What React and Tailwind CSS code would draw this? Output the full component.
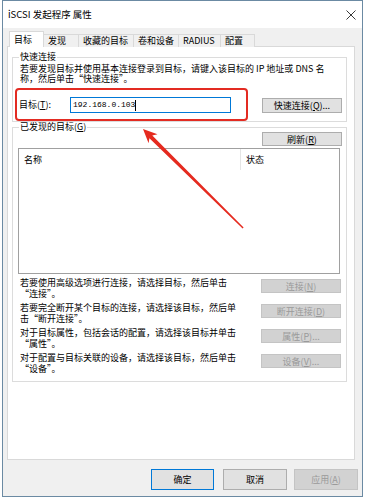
import React from "react";

const F = { fontFamily: '"Noto Sans CJK SC", "Noto Sans", sans-serif' };

function Btn({ children, w = "w-[80px]", disabled = false, def = false, h = "h-[15px]" }) {
  return (
    <div
      className={`${w} ${h} flex items-center justify-center text-[9px] leading-none shrink-0 border ${
        disabled
          ? "bg-[#d2d2d2] border-[#c4c4c4] text-[#9a9a9a]"
          : def
          ? "bg-[#e1e1e1] border-[#0078d7] text-black"
          : "bg-[#e1e1e1] border-[#adadad] text-black"
      }`}
    >
      {children}
    </div>
  );
}

const U = ({ c }) => <span className="underline">{c}</span>;

function Row({ l1, l2, btn }) {
  return (
    <div className="flex justify-between h-[25px]">
      <div className="pl-[7px] text-[9px] leading-[11px] text-black">
        <div>{l1}</div>
        <div>{l2}</div>
      </div>
      <div className="pt-[2px] pr-[5px]">
        <Btn disabled h="h-[14px]">{btn}</Btn>
      </div>
    </div>
  );
}

export default function App() {
  const tabs = [
    ["发现", "w-[35px]"],
    ["收藏的目标", "w-[55px]"],
    ["卷和设备", "w-[45px]"],
    ["RADIUS", "w-[42px]"],
    ["配置", "w-[34px]"],
  ];
  return (
    <div className="relative w-[365px] h-[500px] bg-white overflow-hidden" style={F}>
      <div className="ml-[2px] w-[361px] h-[497px] border border-[#6b8aa3] flex flex-col">
        {/* title bar */}
        <div className="h-[27px] bg-white flex items-center justify-between pl-[5px] pr-[6px] shrink-0">
          <span className="text-[9.5px] text-black">iSCSI 发起程序 属性</span>
          <svg width="10" height="10" viewBox="0 0 10 10">
            <path d="M0.5 0.5 L9.5 9.5 M9.5 0.5 L0.5 9.5" stroke="#222" strokeWidth="0.9" />
          </svg>
        </div>
        {/* body */}
        <div className="flex-1 bg-[#f0f0f0] flex flex-col pl-[4px] pr-[4px]">
          {/* tabs */}
          <div className="flex items-end h-[15px] mt-[4px] pl-[2px] relative z-10 -mb-px">
            <div className="w-[35px] h-[16px] bg-white border border-b-0 border-[#d9d9d9] flex items-center pl-[4px] text-[9px] text-black">
              目标
            </div>
            {tabs.map(([t, w]) => (
              <div
                key={t}
                className={`${w} h-[13px] bg-[#f0f0f0] border border-l-0 border-b-0 border-[#d9d9d9] flex items-center pl-[4px] text-[9px] text-black`}
              >
                {t}
              </div>
            ))}
          </div>
          {/* panel */}
          <div className="w-[348px] h-[414px] bg-white border border-[#d9d9d9] flex flex-col">
            <fieldset className="ml-[4px] mt-[5px] w-[335px] border border-[#dcdcdc] pb-[8px]">
              <legend className="ml-[6px] px-[1px] text-[9px] leading-[10px] text-black">快速连接</legend>
              <div className="pl-[7px] mt-[2px] text-[9px] leading-[10px] text-black whitespace-nowrap">
                <div>若要发现目标并使用基本连接登录到目标，请键入该目标的 IP 地址或 DNS 名</div>
                <div>称，然后单击“快速连接”。</div>
              </div>
              <div className="flex items-center mt-[13px] pl-[6px] pr-[4px]">
                <span className="w-[51px] text-[9px] text-black">
                  目标(<U c="T" />):
                </span>
                <div className="w-[161px] h-[16px] border border-[#0078d7] bg-white flex items-center pl-[2px]">
                  <span className="text-[8px] text-black" style={{ fontFamily: '"Liberation Mono", monospace' }}>
                    192.168.0.103
                  </span>
                  <span className="w-px h-[11px] bg-black" />
                </div>
                <div className="flex-1" />
                <Btn>
                  快速连接(<U c="Q" />)...
                </Btn>
              </div>
            </fieldset>
            <fieldset className="ml-[4px] w-[335px] border border-[#dcdcdc] pb-[4px]">
              <legend className="ml-[6px] px-[1px] text-[9px] leading-[10px] text-black">
                已发现的目标(<U c="G" />)
              </legend>
              <div className="flex justify-end pr-[4px]">
                <Btn h="h-[14px]">
                  刷新(<U c="R" />)
                </Btn>
              </div>
              <div className="ml-[5px] mt-[2px] w-[322px] h-[126px] border border-[#a0a0a0] bg-white">
                <div className="flex h-[21px] text-[9px] text-black">
                  <div className="w-[222px] border-r border-[#e5e5e5] pl-[5px] flex items-center">名称</div>
                  <div className="pl-[5px] flex items-center">状态</div>
                </div>
              </div>
              <div className="mt-[3px] flex flex-col">
                <Row l1="若要使用高级选项进行连接，请选择目标，然后单击" l2="“连接”。" btn={<>连接(<U c="N" />)</>} />
                <Row l1="若要完全断开某个目标的连接，请选择该目标，然后单" l2="击“断开连接”。" btn={<>断开连接(<U c="D" />)</>} />
                <Row l1="对于目标属性，包括会话的配置，请选择该目标并单击" l2="“属性”。" btn={<>属性(<U c="P" />)...</>} />
                <Row l1="对于配置与目标关联的设备，请选择该目标，然后单击" l2="“设备”。" btn={<>设备(<U c="V" />)...</>} />
              </div>
            </fieldset>
          </div>
          {/* bottom buttons */}
          <div className="flex justify-end mt-[9px]">
            <Btn w="w-[63px]" h="h-[21px]" def>确定</Btn>
            <div className="w-[9px]" />
            <Btn w="w-[64px]" h="h-[21px]">取消</Btn>
            <div className="w-[7px]" />
            <Btn w="w-[64px]" h="h-[21px]" disabled>
              应用(<U c="A" />)
            </Btn>
          </div>
        </div>
      </div>
      {/* annotation: red rectangle */}
      <div className="absolute left-[15px] top-[88px] w-[233px] h-[33px] border-2 border-[#e32b22] rounded-[4px]" />
      {/* annotation: arrow */}
      <svg className="absolute left-0 top-0" width="365" height="500" viewBox="0 0 365 500">
        <polygon
          points="143,129 157.5,134.3 152.3,135.6 243.6,227.6 242.6,228.4 149.4,138.2 148.6,143.3"
          fill="#e52a1f"
        />
      </svg>
    </div>
  );
}
